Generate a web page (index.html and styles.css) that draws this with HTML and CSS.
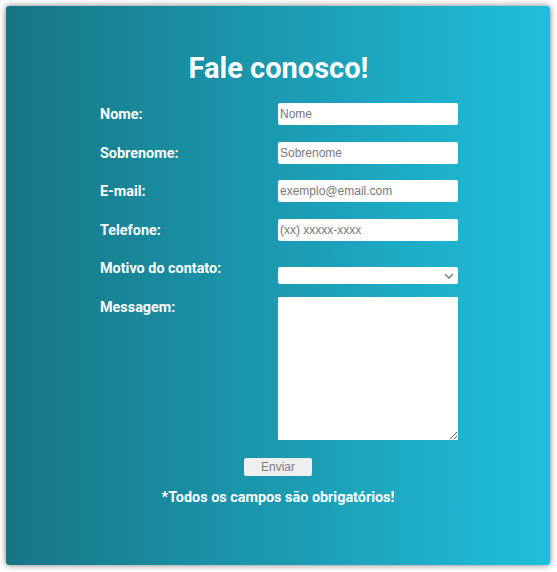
FILE: index.html
```html
<!DOCTYPE html>
<html lang="pt-BR">
<head>
<meta charset="utf-8">
<title>Fale conosco!</title>
<link rel="stylesheet" href="styles.css">
</head>
<body>
<div class="card">
  <h1 class="title">Fale conosco!</h1>
  <form class="form">
    <label class="lbl" for="nome">Nome:</label>
    <input class="field" id="nome" type="text" placeholder="Nome">
    <label class="lbl" for="sobrenome">Sobrenome:</label>
    <input class="field" id="sobrenome" type="text" placeholder="Sobrenome">
    <label class="lbl" for="email">E-mail:</label>
    <input class="field" id="email" type="email" placeholder="exemplo@email.com">
    <label class="lbl" for="tel">Telefone:</label>
    <input class="field" id="tel" type="tel" placeholder="(xx) xxxxx-xxxx">
    <label class="lbl" for="motivo">Motivo do contato:</label>
    <div class="select-wrap">
      <select class="select" id="motivo"><option></option></select>
      <svg class="chev" width="10" height="6" viewBox="0 0 10 6"><path d="M1 1 L5 5 L9 1" fill="none" stroke="#8a8a8a" stroke-width="1.6"/></svg>
    </div>
    <label class="lbl" for="msg">Messagem:</label>
    <textarea class="area" id="msg"></textarea>
  </form>
  <div class="actions"><button class="btn" type="button">Enviar</button></div>
  <p class="note">*Todos os campos são obrigatórios!</p>
</div>
</body>
</html>
```
FILE: styles.css
```css
html, body { margin: 0; padding: 0; }
body {
  background: #ffffff;
  padding: 6px 7px 7px 6px;
  font-family: Roboto, "Liberation Sans", sans-serif;
}
.card {
  box-sizing: border-box;
  width: 544px;
  height: 559px;
  border-radius: 3px;
  background: linear-gradient(to right, #177585, #1fbfdc);
  box-shadow: 0 0 6px rgba(0,0,0,0.55);
  padding-top: 45px;
  color: #fff;
}
.title {
  margin: 0;
  text-align: center;
  font-size: 29px;
  font-weight: 700;
  line-height: 34px;
  padding-left: 1px;
}
.form {
  margin: 18px 0 0 94px;
  display: grid;
  grid-template-columns: 178px 180px;
  row-gap: 16.6px;
  align-items: start;
}
.lbl {
  box-sizing: border-box;
  height: 22px;
  padding-top: 1px;
  font-size: 14.4px;
  font-weight: 700;
  line-height: 22px;
}
.field {
  box-sizing: border-box;
  width: 180px;
  height: 22px;
  border: none;
  border-radius: 2px;
  background: #fff;
  padding: 0 2px;
  margin: 0;
  font-family: "Liberation Sans", Arial, sans-serif;
  font-size: 12px;
  color: #333;
  outline: none;
}
.field::placeholder { color: #7a7a7a; }
.select-wrap {
  position: relative;
  width: 180px;
  height: 17px;
  margin-top: 10px;
  margin-bottom: -5px;
}
.select {
  box-sizing: border-box;
  display: block;
  width: 180px;
  height: 17px;
  border: none;
  border-radius: 2px;
  background: #fff;
  margin: 0;
  appearance: none;
  -webkit-appearance: none;
  outline: none;
}
.chev {
  position: absolute;
  right: 4px;
  top: 6px;
}
.area {
  box-sizing: border-box;
  width: 180px;
  height: 143px;
  border: none;
  border-radius: 1px;
  background: #fff;
  margin: 1px 0 0 0;
  padding: 2px;
  outline: none;
  display: block;
}
.actions {
  display: flex;
  justify-content: center;
  margin-top: 18px;
}
.btn {
  box-sizing: border-box;
  width: 68px;
  height: 18px;
  border: none;
  border-radius: 2px;
  background: #efefef;
  color: #7d7d7d;
  font-family: "Liberation Sans", Arial, sans-serif;
  font-size: 12px;
  line-height: 18px;
  padding: 0;
}
.note {
  margin: 13px 0 0 0;
  text-align: center;
  font-size: 14.4px;
  font-weight: 700;
  line-height: 18px;
}
```
